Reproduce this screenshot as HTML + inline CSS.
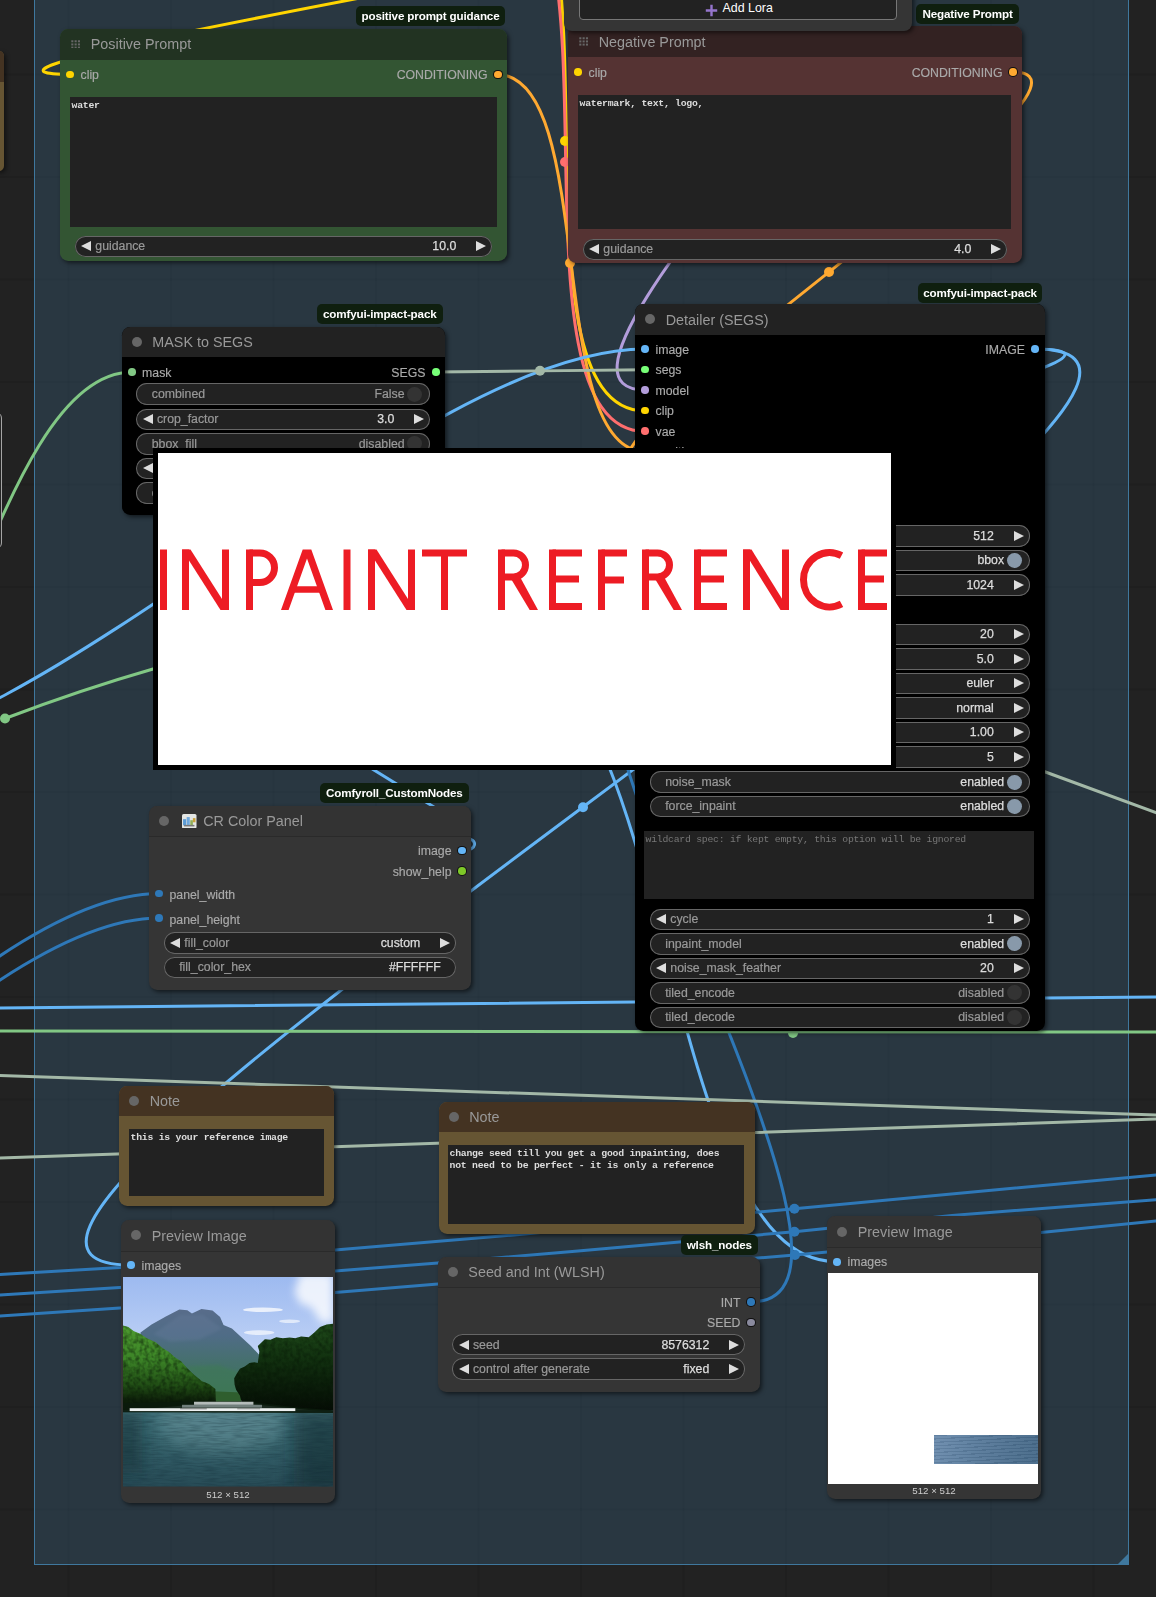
<!DOCTYPE html><html><head><meta charset="utf-8"><title>ComfyUI</title><style>
html,body{margin:0;padding:0;background:#222}
body{width:1156px;height:1597px;overflow:hidden;position:relative;font-family:"Liberation Sans",sans-serif}
#c{position:absolute;left:0;top:0;width:1156px;height:1597px;overflow:hidden;background-color:#222;
background-image:linear-gradient(90deg,rgba(0,0,0,.09) 0 1.5px,transparent 1.5px),linear-gradient(0deg,rgba(0,0,0,.09) 0 1.5px,transparent 1.5px);background-size:102.5px 102.5px;background-position:67.5px 75.5px}
.grp{position:absolute;left:34px;top:-20px;width:1095px;height:1585.3px;background:rgba(63,120,158,.25);border:1px solid #3f789e;box-sizing:border-box}
.grp:after{content:"";position:absolute;right:0;bottom:0;border-style:solid;border-width:0 0 10px 10px;border-color:transparent transparent #3f789e transparent}
.wires,.txt{position:absolute;left:0;top:0}
.node{position:absolute;opacity:.999;border-radius:8.2px;box-shadow:2px 2px 4px rgba(0,0,0,.55)}
.ttl{position:absolute;left:0;top:0;right:0;height:30.75px;border-radius:8.2px 8.2px 0 0;color:#999;font-size:14.35px;line-height:30.75px;white-space:nowrap}
.ttl span{position:absolute;left:30.75px;top:0.6px}
.td{position:absolute;left:10.3px;top:10.3px;width:10.2px;height:10.2px;border-radius:50%;background:#666}
.tgd{position:absolute;left:11px;top:10.8px}
.sd{position:absolute;width:7.6px;height:7.6px;margin:0.3px;border-radius:50%}
.sl{position:absolute;font-size:12.3px;color:#aaa;-webkit-text-stroke:0.15px #aaa;line-height:20.5px;white-space:nowrap}
.w{position:absolute;height:21.5px;border-radius:10.75px;background:#222;box-shadow:inset 0 0 0 1px #666;font-size:12.3px;line-height:20.5px;white-space:nowrap;overflow:hidden}
.wl{position:absolute;top:0.6px;color:#999;-webkit-text-stroke:0.2px #999}
.wv{position:absolute;top:0.6px;color:#ddd;-webkit-text-stroke:0.25px #ddd}
.wv.off{color:#999;-webkit-text-stroke:0.2px #999}
.al{position:absolute;left:6.15px;top:5.6px;border-style:solid;border-width:5.15px 10.25px 5.15px 0;border-color:transparent #ddd transparent transparent}
.ar{position:absolute;right:6.15px;top:5.6px;border-style:solid;border-width:5.15px 0 5.15px 10.25px;border-color:transparent transparent transparent #ddd}
.tg{position:absolute;right:8px;top:3.35px;width:14.8px;height:14.8px;border-radius:50%}
.ta{position:absolute;background:#222;color:#ddd;font-family:"Liberation Mono",monospace;font-size:9.8px;letter-spacing:-0.26px;line-height:11.9px;padding:3px 2.2px 0 1.6px;box-sizing:border-box;white-space:nowrap;overflow:hidden;font-weight:bold}
.ta.ph{color:#777;font-weight:normal}
.bdg{position:absolute;opacity:.999;height:20px;border-radius:5px;background:#0f1f0f;color:#fff;font-weight:bold;font-size:11.65px;line-height:19.3px;text-align:center;white-space:nowrap;letter-spacing:-0.15px}
.upper{position:absolute;left:564px;top:-30px;width:348px;height:61px;background:#353535;border-radius:0 0 8px 8px;box-shadow:2px 2px 4px rgba(0,0,0,.55)}
.btn{position:absolute;left:14.5px;top:20px;width:318px;height:29.5px;box-sizing:border-box;border:1px solid #777;border-radius:4px;background:#222;color:#fff;font-size:12.4px}
.btn span{position:absolute;left:143px;top:9.7px;line-height:15px;white-space:nowrap}
.ovl{position:absolute;left:153px;top:448px;width:743px;height:321.5px;background:#000}
.ovw{position:absolute;left:5px;top:5px;width:733px;height:311.5px;background:#fff}
.pimg{position:absolute;overflow:hidden}
.dim{position:absolute;left:0;right:0;text-align:center;color:#ccc;font-size:9.7px;line-height:12px}
.lp1{position:absolute;left:-6px;top:51px;width:10px;height:120px;background:#665533;border-radius:8px;overflow:hidden;box-shadow:2px 2px 4px rgba(0,0,0,.5)}
.lp1 i{position:absolute;left:0;top:0;width:10px;height:31px;background:#443322}
.lp2{position:absolute;left:-10px;top:411.5px;width:11.5px;height:137.5px;box-sizing:border-box;border:1.8px solid #a5a5a5;border-radius:6px;background:#252525}
</style></head><body><div id="c"><div class="grp"></div><svg class="wires" width="1156" height="1597" viewBox="0 0 1156 1597" fill="none" stroke-linecap="round" stroke-linejoin="round"><path d="M989.4,-142.85 C1225.52,-142.85 -165.87,74.35 70.25,74.35" stroke="#FFD500" stroke-width="3"/><path d="M486.7,-151 C636.4,-151 496.2,411 645.25,411" stroke="#FFD500" stroke-width="3"/><path d="M490.5,-122.6 C632.2,-122.6 497.3,431.5 645.25,431.5" stroke="#FF6E6E" stroke-width="3"/><path d="M496.75,74.35 C598.11,74.35 543.89,451.6 645.25,451.6" stroke="#FFA931" stroke-width="3"/><path d="M960.8,-207.4 C1129.7,-207.4 476.35,390 645.25,390" stroke="#B39DDB" stroke-width="3"/><path d="M-187.65,757.26 C44.23,757.26 413.37,349.1 645.25,349.1" stroke="#64B5F6" stroke-width="3"/><path d="M-203.2,839.2 C-59.41,839.2 -11.54,372 132.25,372" stroke="#81C784" stroke-width="3"/><path d="M5,718.5 Q80,690 153,669" stroke="#81C784" stroke-width="3"/><path d="M434.75,372 C487.38,372 592.62,369.75 645.25,369.75" stroke="#A3B8A7" stroke-width="3"/><path d="M1012.5,72 C1148.27,72 509.48,472.1 645.25,472.1" stroke="#FFA931" stroke-width="3"/><path d="M1035.5,349.1 C1357.4,349.1 -191.4,1265 130.5,1265" stroke="#64B5F6" stroke-width="3"/><path d="M1035.5,349 C1076,349 1072,357 1040,369" stroke="#64B5F6" stroke-width="3"/><path d="M496.6,646.8 C672.08,646.8 660.02,1261.5 835.5,1261.5" stroke="#64B5F6" stroke-width="3"/><path d="M751,1302 C925.26,1302 472.54,612.8 646.8,612.8" stroke="#2E78B8" stroke-width="3"/><path d="M-529,1314 C-327.36,1314 -42.39,893.5 159.25,893.5" stroke="#2E78B8" stroke-width="3"/><path d="M-508,1313 C-314.15,1313 -34.6,918 159.25,918" stroke="#2E78B8" stroke-width="3"/><path d="M-2,1008 L1158,997" stroke="#64B5F6" stroke-width="3"/><path d="M-2,1031 L1158,1032" stroke="#81C784" stroke-width="3"/><path d="M-2,1075.4 L1158,1115" stroke="#A3B8A7" stroke-width="3"/><path d="M-2,1158 L1158,1119" stroke="#A3B8A7" stroke-width="3"/><path d="M1040,770 L1158,813.3" stroke="#A3B8A7" stroke-width="3"/><path d="M-2,1274.6 L120,1267.5 L335,1250 L514,1235 L794.4,1208.7 L1158,1174.8" stroke="#2E78B8" stroke-width="3"/><path d="M-2,1295.1 L120,1287.5 L335,1271 L438,1263 L578,1251 L794.4,1231.7 L952,1215.4 L1158,1199.5" stroke="#2E78B8" stroke-width="3"/><path d="M-2,1316.1 L120,1308 L335,1292.5 L438,1284 L794.6,1255 L1041,1232.5 L1158,1220.8" stroke="#2E78B8" stroke-width="3"/><path d="M461.75,850.6 C478,850.6 478,839 466,838" stroke="#64B5F6" stroke-width="3"/><path d="M352,756.5 L434,807" stroke="#64B5F6" stroke-width="3"/><circle cx="565" cy="141" r="5" fill="#FFD500"/><circle cx="565" cy="162" r="5" fill="#FF6E6E"/><circle cx="570" cy="263" r="5" fill="#FFA931"/><circle cx="5" cy="718.5" r="5" fill="#81C784"/><circle cx="540" cy="370.8" r="5" fill="#A3B8A7"/><circle cx="829" cy="272" r="5" fill="#FFA931"/><circle cx="583" cy="807.2" r="5" fill="#64B5F6"/><circle cx="793" cy="1033" r="5" fill="#81C784"/><circle cx="794.4" cy="1208.7" r="5" fill="#2E78B8"/><circle cx="794.4" cy="1231.7" r="5" fill="#2E78B8"/><circle cx="795" cy="1255" r="5" fill="#2E78B8"/></svg><div class="lp1"><i></i></div><div class="lp2"></div><div class="node" style="left:60px;top:29px;width:447px;height:232px;background:#335533"><div class="ttl" style="background:#223322"><svg class="tgd" width="9" height="8.6" viewBox="0 0 9.5 9.5" preserveAspectRatio="none"><rect x="0.3" y="0.3" width="2.2" height="2.2" fill="#666"/><rect x="0.3" y="3.8" width="2.2" height="2.2" fill="#666"/><rect x="0.3" y="7.3" width="2.2" height="2.2" fill="#666"/><rect x="3.8" y="0.3" width="2.2" height="2.2" fill="#666"/><rect x="3.8" y="3.8" width="2.2" height="2.2" fill="#666"/><rect x="3.8" y="7.3" width="2.2" height="2.2" fill="#666"/><rect x="7.3" y="0.3" width="2.2" height="2.2" fill="#666"/><rect x="7.3" y="3.8" width="2.2" height="2.2" fill="#666"/><rect x="7.3" y="7.3" width="2.2" height="2.2" fill="#666"/></svg><span style="top:-0.1px">Positive Prompt</span></div><i class="sd" style="left:6.15px;top:41.25px;background:#FFD500"></i><span class="sl" style="left:20.5px;top:36.05px">clip</span><i class="sd" style="left:433.65px;top:41.25px;background:#FFA931;box-shadow:0 0 0 1px #111"></i><span class="sl r" style="right:19.5px;top:36.05px">CONDITIONING</span><div class="ta " style="left:10px;top:68px;width:426.5px;height:130px">water</div><div class="w" style="left:14.8px;top:206.9px;width:417.4px"><i class="al"></i><i class="ar"></i><span class="wl" style="left:20.5px">guidance</span><span class="wv" style="right:35.9px">10.0</span></div></div><div class="bdg" style="left:356px;top:6px;width:149px">positive prompt guidance</div><div class="node" style="left:568px;top:26.25px;width:454px;height:236.25px;background:#553333"><div class="ttl" style="background:#332222"><svg class="tgd" width="9" height="8.6" viewBox="0 0 9.5 9.5" preserveAspectRatio="none"><rect x="0.3" y="0.3" width="2.2" height="2.2" fill="#666"/><rect x="0.3" y="3.8" width="2.2" height="2.2" fill="#666"/><rect x="0.3" y="7.3" width="2.2" height="2.2" fill="#666"/><rect x="3.8" y="0.3" width="2.2" height="2.2" fill="#666"/><rect x="3.8" y="3.8" width="2.2" height="2.2" fill="#666"/><rect x="3.8" y="7.3" width="2.2" height="2.2" fill="#666"/><rect x="7.3" y="0.3" width="2.2" height="2.2" fill="#666"/><rect x="7.3" y="3.8" width="2.2" height="2.2" fill="#666"/><rect x="7.3" y="7.3" width="2.2" height="2.2" fill="#666"/></svg><span style="top:0.6px"><b style="font-weight:normal;position:relative;top:0.5px">Negative Prompt</b></span></div><i class="sd" style="left:6.15px;top:41.65px;background:#FFD500"></i><span class="sl" style="left:20.5px;top:36.45px">clip</span><i class="sd" style="left:440.65px;top:41.65px;background:#FFA931;box-shadow:0 0 0 1px #111"></i><span class="sl r" style="right:19.5px;top:36.45px">CONDITIONING</span><div class="ta " style="left:10px;top:68.75px;width:433px;height:133.5px">watermark, text, logo,</div><div class="w" style="left:14.8px;top:212.25px;width:424.4px"><i class="al"></i><i class="ar"></i><span class="wl" style="left:20.5px">guidance</span><span class="wv" style="right:35.9px">4.0</span></div></div><div class="bdg" style="left:916px;top:4px;width:103px">Negative Prompt</div><div class="upper"><div class="btn"><svg width="13" height="13" viewBox="0 0 13 13" style="position:absolute;left:125px;top:12.6px"><path d="M6.5,0.8V12.2M0.8,6.5H12.2" stroke="#9575CD" stroke-width="2.4" fill="none"/></svg><span>Add Lora</span></div></div><div class="node" style="left:121.6px;top:326.5px;width:323.4px;height:188px;background:#000"><div class="ttl" style="background:#222"><i class="td"></i><span style="top:0.6px">MASK to SEGS</span></div><i class="sd" style="left:6.15px;top:41.4px;background:#81C784"></i><span class="sl" style="left:20.5px;top:36.2px">mask</span><i class="sd" style="left:310.05px;top:41.4px;background:#77FF77"></i><span class="sl r" style="right:19.5px;top:36.2px">SEGS</span><div class="w" style="left:14.8px;top:56.9px;width:293.8px"><span class="wl" style="left:15.4px">combined</span><span class="wv off" style="right:25.6px">False</span><i class="tg" style="background:#333"></i></div><div class="w" style="left:14.8px;top:82px;width:293.8px"><i class="al"></i><i class="ar"></i><span class="wl" style="left:20.5px">crop_factor</span><span class="wv" style="right:35.9px">3.0</span></div><div class="w" style="left:14.8px;top:106.5px;width:293.8px"><span class="wl" style="left:15.4px">bbox_fill</span><span class="wv off" style="right:25.6px">disabled</span><i class="tg" style="background:#333"></i></div><div class="w" style="left:14.8px;top:131px;width:293.8px"><i class="al"></i><i class="ar"></i><span class="wl" style="left:20.5px">drop_size</span><span class="wv" style="right:35.9px">10</span></div><div class="w" style="left:14.8px;top:155.6px;width:293.8px"><span class="wl" style="left:15.4px">contour_fill</span><span class="wv off" style="right:25.6px">disabled</span><i class="tg" style="background:#333"></i></div></div><div class="bdg" style="left:317px;top:304px;width:125.5px">comfyui-impact-pack</div><div class="node" style="left:635px;top:304px;width:409.5px;height:727px;background:#000"><div class="ttl" style="background:#222"><i class="td"></i><span style="top:0.6px">Detailer (SEGS)</span></div><i class="sd" style="left:6.15px;top:41px;background:#64B5F6"></i><span class="sl" style="left:20.5px;top:35.8px">image</span><i class="sd" style="left:6.15px;top:61.5px;background:#77FF77"></i><span class="sl" style="left:20.5px;top:56.3px">segs</span><i class="sd" style="left:6.15px;top:82px;background:#B39DDB"></i><span class="sl" style="left:20.5px;top:76.8px">model</span><i class="sd" style="left:6.15px;top:102.5px;background:#FFD500"></i><span class="sl" style="left:20.5px;top:97.3px">clip</span><i class="sd" style="left:6.15px;top:123px;background:#FF6E6E"></i><span class="sl" style="left:20.5px;top:117.8px">vae</span><i class="sd" style="left:6.15px;top:143.5px;background:#FFA931"></i><span class="sl" style="left:20.5px;top:138.3px">positive</span><i class="sd" style="left:6.15px;top:164px;background:#FFA931"></i><span class="sl" style="left:20.5px;top:158.8px">negative</span><i class="sd" style="left:6.15px;top:184.5px;background:#999966"></i><span class="sl" style="left:20.5px;top:179.3px">detailer_hook</span><i class="sd" style="left:6.15px;top:205px;background:#2E78B8"></i><span class="sl" style="left:20.5px;top:199.8px">seed</span><i class="sd" style="left:396.15px;top:41px;background:#64B5F6"></i><span class="sl r" style="right:19.5px;top:35.8px">IMAGE</span><div class="w" style="left:14.8px;top:221.3px;width:379.9px"><i class="al"></i><i class="ar"></i><span class="wl" style="left:20.5px">guide_size</span><span class="wv" style="right:35.9px">512</span></div><div class="w" style="left:14.8px;top:245.8px;width:379.9px"><span class="wl" style="left:15.4px">guide_size_for</span><span class="wv" style="right:25.6px">bbox</span><i class="tg" style="background:#8899AA"></i></div><div class="w" style="left:14.8px;top:270.4px;width:379.9px"><i class="al"></i><i class="ar"></i><span class="wl" style="left:20.5px">max_size</span><span class="wv" style="right:35.9px">1024</span></div><div class="w" style="left:14.8px;top:319.5px;width:379.9px"><i class="al"></i><i class="ar"></i><span class="wl" style="left:20.5px">steps</span><span class="wv" style="right:35.9px">20</span></div><div class="w" style="left:14.8px;top:344px;width:379.9px"><i class="al"></i><i class="ar"></i><span class="wl" style="left:20.5px">cfg</span><span class="wv" style="right:35.9px">5.0</span></div><div class="w" style="left:14.8px;top:368.6px;width:379.9px"><i class="al"></i><i class="ar"></i><span class="wl" style="left:20.5px">sampler_name</span><span class="wv" style="right:35.9px">euler</span></div><div class="w" style="left:14.8px;top:393.2px;width:379.9px"><i class="al"></i><i class="ar"></i><span class="wl" style="left:20.5px">scheduler</span><span class="wv" style="right:35.9px">normal</span></div><div class="w" style="left:14.8px;top:417.7px;width:379.9px"><i class="al"></i><i class="ar"></i><span class="wl" style="left:20.5px">denoise</span><span class="wv" style="right:35.9px">1.00</span></div><div class="w" style="left:14.8px;top:442.3px;width:379.9px"><i class="al"></i><i class="ar"></i><span class="wl" style="left:20.5px">feather</span><span class="wv" style="right:35.9px">5</span></div><div class="w" style="left:14.8px;top:467.4px;width:379.9px"><span class="wl" style="left:15.4px">noise_mask</span><span class="wv" style="right:25.6px">enabled</span><i class="tg" style="background:#8899AA"></i></div><div class="w" style="left:14.8px;top:491.5px;width:379.9px"><span class="wl" style="left:15.4px">force_inpaint</span><span class="wv" style="right:25.6px">enabled</span><i class="tg" style="background:#8899AA"></i></div><div class="ta ph" style="left:9px;top:527px;width:390px;height:68px">wildcard spec: if kept empty, this option will be ignored</div><div class="w" style="left:14.8px;top:604.5px;width:379.9px"><i class="al"></i><i class="ar"></i><span class="wl" style="left:20.5px">cycle</span><span class="wv" style="right:35.9px">1</span></div><div class="w" style="left:14.8px;top:629px;width:379.9px"><span class="wl" style="left:15.4px">inpaint_model</span><span class="wv" style="right:25.6px">enabled</span><i class="tg" style="background:#8899AA"></i></div><div class="w" style="left:14.8px;top:653.5px;width:379.9px"><i class="al"></i><i class="ar"></i><span class="wl" style="left:20.5px">noise_mask_feather</span><span class="wv" style="right:35.9px">20</span></div><div class="w" style="left:14.8px;top:678px;width:379.9px"><span class="wl" style="left:15.4px">tiled_encode</span><span class="wv off" style="right:25.6px">disabled</span><i class="tg" style="background:#333"></i></div><div class="w" style="left:14.8px;top:702.5px;width:379.9px"><span class="wl" style="left:15.4px">tiled_decode</span><span class="wv off" style="right:25.6px">disabled</span><i class="tg" style="background:#333"></i></div></div><div class="bdg" style="left:918px;top:282.5px;width:124px">comfyui-impact-pack</div><div class="node" style="left:149px;top:805.5px;width:322px;height:184.5px;background:#353535"><div class="ttl" style="background:#333;box-shadow:0 1px 0 #2a2a2a"><i class="td"></i><svg width="14.5" height="14.5" viewBox="0 0 14 14" style="position:absolute;left:33px;top:8.3px"><rect width="14" height="14" rx="1.5" fill="#e4e6e4"/><rect x="1" y="5" width="3" height="6" fill="#5b9bd5"/><rect x="4.5" y="3" width="3" height="8" fill="#6fa8dc"/><rect x="8" y="6" width="2.5" height="5" fill="#8fb05a"/><rect x="10.5" y="4" width="2.5" height="4" fill="#c9a13a"/><rect x="2" y="10.5" width="10" height="1.5" fill="#777"/></svg><span style="top:0.6px"><b style="font-weight:normal;margin-left:23.5px">CR Color Panel</b></span></div><i class="sd" style="left:308.65px;top:41px;background:#64B5F6;box-shadow:0 0 0 1px #111"></i><span class="sl r" style="right:19.5px;top:35.8px">image</span><i class="sd" style="left:308.65px;top:61.5px;background:#7EC828;box-shadow:0 0 0 1px #111"></i><span class="sl r" style="right:19.5px;top:56.3px">show_help</span><i class="sd" style="left:6.15px;top:83.9px;background:#2E78B8"></i><span class="sl" style="left:20.5px;top:79.7px">panel_width</span><i class="sd" style="left:6.15px;top:108.4px;background:#2E78B8"></i><span class="sl" style="left:20.5px;top:104.2px">panel_height</span><div class="w" style="left:14.8px;top:126.5px;width:292.4px"><i class="al"></i><i class="ar"></i><span class="wl" style="left:20.5px">fill_color</span><span class="wv" style="right:35.9px">custom</span></div><div class="w" style="left:14.8px;top:151px;width:292.4px"><span class="wl" style="left:15.4px">fill_color_hex</span><span class="wv" style="right:15.4px">#FFFFFF</span></div></div><div class="bdg" style="left:320px;top:783px;width:148.5px">Comfyroll_CustomNodes</div><div class="node" style="left:119px;top:1085.5px;width:215px;height:120.5px;background:#665533"><div class="ttl" style="background:#443322"><i class="td"></i><span style="top:0.6px">Note</span></div><div class="ta " style="left:10px;top:43.5px;width:195px;height:66.7px">this is your reference image</div></div><div class="node" style="left:438.5px;top:1101.7px;width:316.5px;height:132.3px;background:#665533"><div class="ttl" style="background:#443322"><i class="td"></i><span style="top:0.6px">Note</span></div><div class="ta " style="left:9.5px;top:43.3px;width:295.5px;height:79.5px">change seed till you get a good inpainting, does<br>not need to be perfect - it is only a reference</div></div><div class="node" style="left:121px;top:1220px;width:214px;height:282.5px;background:#353535"><div class="ttl" style="background:#333;box-shadow:0 1px 0 #2a2a2a"><i class="td"></i><span style="top:0.6px">Preview Image</span></div><i class="sd" style="left:6.15px;top:41px;background:#64B5F6"></i><span class="sl" style="left:20.5px;top:35.8px">images</span><div class="pimg" style="left:2px;top:57.4px;width:210px;height:209.5px"><svg width="210" height="209.5" viewBox="0 0 1103 1100" preserveAspectRatio="none" style="display:block"><defs><linearGradient id="sky" x1="0" y1="0" x2="0" y2="1"><stop offset="0" stop-color="#9dbaf0"/><stop offset="0.5" stop-color="#bcd0f5"/><stop offset="1" stop-color="#d6e2f8"/></linearGradient><linearGradient id="mt" x1="0" y1="0" x2="0" y2="1"><stop offset="0" stop-color="#586c8a"/><stop offset="0.3" stop-color="#4f6c86"/><stop offset="0.6" stop-color="#45706c"/><stop offset="1" stop-color="#3f7458"/></linearGradient><linearGradient id="lt" x1="0" y1="0" x2="0" y2="1"><stop offset="0" stop-color="#4d9a2f"/><stop offset="0.4" stop-color="#3c8427"/><stop offset="0.72" stop-color="#1f4a14"/><stop offset="0.88" stop-color="#0e200a"/><stop offset="1" stop-color="#0a1608"/></linearGradient><linearGradient id="rt" x1="0" y1="0" x2="0" y2="1"><stop offset="0" stop-color="#1f4a1a"/><stop offset="0.4" stop-color="#11300f"/><stop offset="1" stop-color="#050b05"/></linearGradient><linearGradient id="wt" x1="0" y1="0" x2="0" y2="1"><stop offset="0" stop-color="#41727a"/><stop offset="0.3" stop-color="#38666f"/><stop offset="1" stop-color="#274b56"/></linearGradient><filter id="b6" x="-20%" y="-20%" width="140%" height="140%"><feGaussianBlur stdDeviation="7"/></filter><filter id="b3"><feGaussianBlur stdDeviation="3"/></filter><filter id="b20" x="-30%" y="-30%" width="160%" height="160%"><feGaussianBlur stdDeviation="22"/></filter><filter id="b40" filterUnits="userSpaceOnUse" x="-400" y="300" width="1900" height="1200"><feGaussianBlur stdDeviation="45"/></filter>
<filter id="wav" x="0" y="0" width="100%" height="100%" color-interpolation-filters="sRGB"><feTurbulence type="fractalNoise" baseFrequency="0.012 0.11" numOctaves="2" seed="4"/><feColorMatrix values="0 0 0 0 0.06  0 0 0 0 0.16  0 0 0 0 0.2  0 0 0 1.6 -0.62"/></filter>
<filter id="fol" x="0" y="0" width="100%" height="100%" color-interpolation-filters="sRGB"><feTurbulence type="fractalNoise" baseFrequency="0.045 0.04" numOctaves="2" seed="9"/><feColorMatrix values="0 0 0 0 0.02  0 0 0 0 0.07  0 0 0 0 0.02  0 0 0 2 -0.75"/></filter>
<clipPath id="cw"><rect x="0" y="700" width="1103" height="400"/></clipPath><clipPath id="cl"><path d="M0,255 L28,262 L55,283 L90,298 L125,322 L172,342 L205,372 L240,392 L272,422 L305,442 L340,482 L372,512 L415,547 L452,562 L485,588 L488,660 L0,702 Z"/></clipPath>
<clipPath id="cr"><path d="M1103,245 L1070,250 L1035,262 L1005,292 L975,317 L935,312 L905,322 L875,318 L840,322 L805,317 L775,330 L745,327 L708,362 L716,390 L714,412 L708,452 L690,447 L664,452 L640,470 L614,482 L596,510 L584,532 L586,565 L594,592 L614,622 L624,662 L914,692 L1103,712 Z"/></clipPath></defs>
<rect width="1103" height="720" fill="url(#sky)"/>
<path d="M930,-20 L1103,-20 L1103,235 L1040,240 L990,160 L930,140 L900,80 Z" fill="#fff" opacity=".8" filter="url(#b20)"/>
<ellipse cx="735" cy="172" rx="105" ry="12" fill="#fff" opacity=".75" filter="url(#b3)"/>
<ellipse cx="875" cy="232" rx="55" ry="9" fill="#fff" opacity=".6" filter="url(#b3)"/>
<ellipse cx="715" cy="292" rx="80" ry="12" fill="#fff" opacity=".65" filter="url(#b3)"/>
<path d="M92,292 L150,250 L225,208 L296,170 L338,174 L362,192 L412,168 L470,176 L510,210 L528,252 L572,270 L672,362 L720,414 L720,640 L92,640 Z" fill="url(#mt)"/>
<path d="M160,300 L300,200 L420,200 L520,270 L400,330 L250,340 Z" fill="#6a7f9e" opacity=".3" filter="url(#b6)"/>
<path d="M330,470 L500,462 L610,500 L620,610 L470,610 Z" fill="#3d7a52" opacity=".55" filter="url(#b6)"/>
<path d="M470,600 L620,606 L620,662 L470,662 Z" fill="#2f5e2e"/>
<path d="M0,255 L28,262 L55,283 L90,298 L125,322 L172,342 L205,372 L240,392 L272,422 L305,442 L340,482 L372,512 L415,547 L452,562 L485,588 L488,660 L0,702 Z" fill="url(#lt)"/>
<rect x="0" y="240" width="500" height="470" filter="url(#fol)" clip-path="url(#cl)" opacity=".55"/>
<path d="M1103,245 L1070,250 L1035,262 L1005,292 L975,317 L935,312 L905,322 L875,318 L840,322 L805,317 L775,330 L745,327 L708,362 L716,390 L714,412 L708,452 L690,447 L664,452 L640,470 L614,482 L596,510 L584,532 L586,565 L594,592 L614,622 L624,662 L914,692 L1103,712 Z" fill="url(#rt)"/>
<rect x="580" y="240" width="523" height="480" filter="url(#fol)" clip-path="url(#cr)" opacity=".45"/>
<rect x="0" y="700" width="1103" height="400" fill="url(#wt)"/>
<g clip-path="url(#cw)"><ellipse cx="520" cy="770" rx="330" ry="150" fill="#7aa4ac" opacity=".4" filter="url(#b40)"/>
<rect x="-60" y="700" width="160" height="330" fill="#0c2026" opacity=".45" filter="url(#b40)"/>
<rect x="900" y="700" width="300" height="420" fill="#0c2026" opacity=".5" filter="url(#b40)"/></g>
<rect x="0" y="712" width="1103" height="388" filter="url(#wav)" opacity=".4"/>
<path d="M0,662 L300,655 L640,652 L920,685 L1103,700 L1103,714 L0,710 Z" fill="#0b1a0c" opacity=".92"/>
<rect x="373" y="655" width="312" height="16" fill="#d2d8d8" opacity=".85"/>
<rect x="310" y="671" width="420" height="15" fill="#8f9c9c" opacity=".75"/>
<rect x="35" y="689" width="870" height="15" fill="#eef1f1"/>
<rect x="300" y="689" width="140" height="6" fill="#333" opacity=".5"/><rect x="600" y="689" width="120" height="6" fill="#333" opacity=".4"/>
</svg>
</div><div class="dim" style="top:269.2px">512 × 512</div></div><div class="node" style="left:437.6px;top:1256.7px;width:322.4px;height:135.5px;background:#353535"><div class="ttl" style="background:#333;box-shadow:0 1px 0 #2a2a2a"><i class="td"></i><span style="top:0.6px">Seed and Int (WLSH)</span></div><i class="sd" style="left:309.05px;top:41.3px;background:#2E78B8;box-shadow:0 0 0 1px #111"></i><span class="sl r" style="right:19.5px;top:36.1px">INT</span><i class="sd" style="left:309.05px;top:61.8px;background:#8A8A9E;box-shadow:0 0 0 1px #111"></i><span class="sl r" style="right:19.5px;top:56.6px">SEED</span><div class="w" style="left:14.8px;top:77.3px;width:292.8px"><i class="al"></i><i class="ar"></i><span class="wl" style="left:20.5px">seed</span><span class="wv" style="right:35.9px">8576312</span></div><div class="w" style="left:14.8px;top:101.8px;width:292.8px"><i class="al"></i><i class="ar"></i><span class="wl" style="left:20.5px">control after generate</span><span class="wv" style="right:35.9px">fixed</span></div></div><div class="bdg" style="left:681px;top:1234.5px;width:76.5px">wlsh_nodes</div><div class="node" style="left:827px;top:1216.3px;width:214px;height:282.7px;background:#353535"><div class="ttl" style="background:#333;box-shadow:0 1px 0 #2a2a2a"><i class="td"></i><span style="top:0.6px">Preview Image</span></div><i class="sd" style="left:6.15px;top:41.4px;background:#64B5F6"></i><span class="sl" style="left:20.5px;top:36.2px">images</span><div class="pimg" style="left:1px;top:56.7px;width:210.2px;height:210.7px;background:#fff"><div style="position:absolute;left:106px;top:161.7px;right:0;height:29.8px;background:linear-gradient(100deg,#6c8cae,#587a9a 45%,#466988);overflow:hidden"><div style="position:absolute;inset:0;background:repeating-linear-gradient(177deg,rgba(20,40,60,.10) 0 1.2px,rgba(255,255,255,.04) 1.2px 3.4px)"></div></div></div><div class="dim" style="top:268.9px">512 × 512</div></div><div class="ovl"><div class="ovw"></div></div><svg class="txt" width="1156" height="1597" viewBox="0 0 1156 1597"><path d="M163.5,549.5 V610" stroke="#ed1c24" stroke-width="7" fill="none"/><path d="M185.5,549.5 V610" stroke="#ed1c24" stroke-width="7" fill="none"/><path d="M225.5,549.5 V610" stroke="#ed1c24" stroke-width="7" fill="none"/><path d="M182,549.5 L190.5,549.5 L229,610 L220.5,610 Z" fill="#ed1c24"/><path d="M249.5,549.5 V610" stroke="#ed1c24" stroke-width="7" fill="none"/><path d="M249.5,553 H259.75 A14.75,14.75 0 0 1 259.75,582.5 H249.5" stroke="#ed1c24" stroke-width="7" fill="none"/><path d="M281,610 L302.7,549.5 L311.3,549.5 L333,610 L325.4,610 L307,558.5 L288.6,610 Z" fill="#ed1c24"/><path d="M292,589.5 H322" stroke="#ed1c24" stroke-width="6.5" fill="none"/><path d="M347,549.5 V610" stroke="#ed1c24" stroke-width="7" fill="none"/><path d="M371.5,549.5 V610" stroke="#ed1c24" stroke-width="7" fill="none"/><path d="M411.5,549.5 V610" stroke="#ed1c24" stroke-width="7" fill="none"/><path d="M368,549.5 L376.5,549.5 L415,610 L406.5,610 Z" fill="#ed1c24"/><path d="M422,553 H467" stroke="#ed1c24" stroke-width="7" fill="none"/><path d="M444.5,553 V610" stroke="#ed1c24" stroke-width="7" fill="none"/><path d="M501.5,549.5 V610" stroke="#ed1c24" stroke-width="7" fill="none"/><path d="M501.5,553 H513.5 A12,12 0 0 1 513.5,577 H501.5" stroke="#ed1c24" stroke-width="7" fill="none"/><path d="M510.5,578 L519,575 L538,610 L529.7,610 Z" fill="#ed1c24"/><path d="M552.5,549.5 V610" stroke="#ed1c24" stroke-width="7" fill="none"/><path d="M552.5,553 H582" stroke="#ed1c24" stroke-width="7" fill="none"/><path d="M552.5,579 H579" stroke="#ed1c24" stroke-width="7" fill="none"/><path d="M552.5,606.5 H582" stroke="#ed1c24" stroke-width="7" fill="none"/><path d="M601.5,549.5 V610" stroke="#ed1c24" stroke-width="7" fill="none"/><path d="M601.5,553 H627" stroke="#ed1c24" stroke-width="7" fill="none"/><path d="M601.5,580 H624" stroke="#ed1c24" stroke-width="7" fill="none"/><path d="M645.5,549.5 V610" stroke="#ed1c24" stroke-width="7" fill="none"/><path d="M645.5,553 H657.5 A12,12 0 0 1 657.5,577 H645.5" stroke="#ed1c24" stroke-width="7" fill="none"/><path d="M654.5,578 L663,575 L682,610 L673.7,610 Z" fill="#ed1c24"/><path d="M697.5,549.5 V610" stroke="#ed1c24" stroke-width="7" fill="none"/><path d="M697.5,553 H727" stroke="#ed1c24" stroke-width="7" fill="none"/><path d="M697.5,579 H724" stroke="#ed1c24" stroke-width="7" fill="none"/><path d="M697.5,606.5 H727" stroke="#ed1c24" stroke-width="7" fill="none"/><path d="M746.5,549.5 V610" stroke="#ed1c24" stroke-width="7" fill="none"/><path d="M785.5,549.5 V610" stroke="#ed1c24" stroke-width="7" fill="none"/><path d="M743,549.5 L751.5,549.5 L789,610 L780.5,610 Z" fill="#ed1c24"/><path d="M841.5,555.67 A26,27.2 0 1 0 841.5,603.93" stroke="#ed1c24" stroke-width="7" fill="none"/><path d="M861.5,549.5 V610" stroke="#ed1c24" stroke-width="7" fill="none"/><path d="M861.5,553 H887" stroke="#ed1c24" stroke-width="7" fill="none"/><path d="M861.5,579 H884" stroke="#ed1c24" stroke-width="7" fill="none"/><path d="M861.5,606.5 H887" stroke="#ed1c24" stroke-width="7" fill="none"/></svg></div></body></html>
